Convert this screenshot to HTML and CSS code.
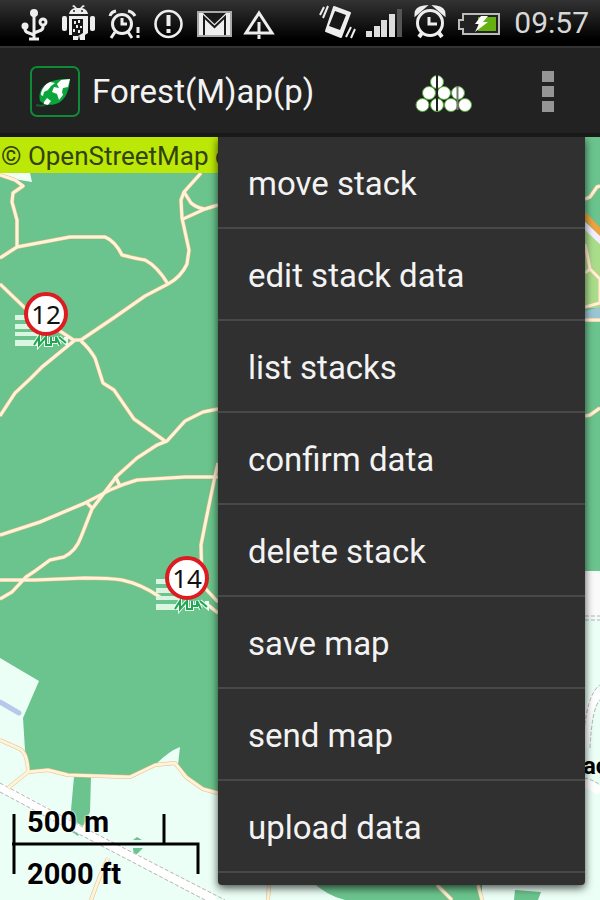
FILE: index.html
```
<!DOCTYPE html>
<html lang="en">
<head>
    <meta charset="UTF-8">
    <meta name="viewport" content="width=device-width, initial-scale=1.0">
    <title>Forest(M)ap(p)</title>
    <link rel="stylesheet" href="styles.css">
</head>
<body>
<div class="statusbar">
  <div class="notifications">
    <!-- usb -->
    <svg width="28" height="36" viewBox="0 0 28 36" fill="none" stroke="#eee" stroke-width="3">
      <path d="M14 8V34M5 21v3q0 3 4 4l5 2M23 19v3q0 3-4 4l-5 2"/>
      <circle cx="14" cy="8" r="4" fill="#eee" stroke="none"/><circle cx="5" cy="21" r="3.5" fill="#eee" stroke="none"/>
      <circle cx="23" cy="17" r="3"/><path d="M9 34h10" stroke-width="3"/>
    </svg>
    <!-- android -->
    <svg width="33" height="36" viewBox="0 0 33 36" fill="#eee">
      <path d="M7 9q1-5 6-6l-3-2 2-1 3 3h3l3-3 2 1-3 2q5 1 6 6z"/>
      <rect x="0" y="11" width="5" height="15" rx="2"/><rect x="28" y="11" width="5" height="15" rx="2"/>
      <path d="M7 11h19v17l-3 2v5h-5l-1-5-1 5h-5v-5H7z"/>
      <path d="M10 14h11v14l-5 3h-6z" fill="#161616"/>
      <path d="M12 16h2v3h-2zM16 15h2v3h-2zM14 20h2v3h-2zM18 21h2v2h-2zM11 24h2v3h-2zM16 25h2v3h-2z"/>
      <circle cx="12" cy="6" r="1" fill="#222"/><circle cx="20" cy="6" r="1" fill="#222"/>
    </svg>
    <!-- alarm with mark -->
    <svg width="31" height="36" viewBox="0 0 31 36" fill="none" stroke="#eee" stroke-width="3">
      <circle cx="13" cy="19" r="9.5"/><path d="M13 13v6h5"/><path d="M1 11q1-4 6-5M19 6q5 1 7 5" stroke-width="3"/>
      <path d="M6 27l-4 6M19 27l4 6"/><path d="M29 22v6M29 30v3" stroke-width="3"/>
    </svg>
    <!-- notice -->
    <svg width="30" height="36" viewBox="0 0 30 36" fill="none" stroke="#eee" stroke-width="2.6">
      <circle cx="14.5" cy="19" r="13"/><path d="M14.5 10v11M14.5 24v4" stroke-width="4"/>
    </svg>
    <!-- gmail -->
    <svg width="35" height="36" viewBox="0 0 35 36">
      <rect x="0" y="7" width="33" height="24" fill="#eee" stroke="#aaa" stroke-width="2"/>
      <path d="M6 30V12l10.500 10L27 12v18" fill="none" stroke="#1a1a1a" stroke-width="2"/>
      <path d="M5 8h23l-11.500 11z" fill="#1a1a1a"/>
    </svg>
    <!-- warning -->
    <svg width="32" height="36" viewBox="0 0 32 36" fill="none" stroke="#eee" stroke-width="3">
      <path d="M12 8L-1 28h26z"/><path d="M12 17v11M12 30v4"/>
    </svg>
  </div>
  <div class="system">
    <!-- vibrate -->
    <svg width="34" height="36" viewBox="0 0 34 36" fill="none" stroke="#eee">
      <path d="M14 2l16 6-9 24-15-6z" fill="#eee" stroke-width="2" stroke-linejoin="round"/>
      <path d="M15 6l11 4-6 15-11-4z" fill="#181818" stroke="none"/>
      <path d="M4 2L0 10M8 1L3 13M31 22l-5 10M35 24l-4 9" stroke-width="2"/>
    </svg>
    <!-- signal -->
    <svg width="37" height="36" viewBox="0 0 37 36" fill="#ddd">
      <rect x="0" y="26" width="6" height="6"/><rect x="8" y="21" width="6" height="11"/>
      <rect x="15" y="15" width="6" height="17"/><rect x="23" y="9" width="6" height="23"/>
      <rect x="31" y="4" width="5" height="28" fill="#555"/>
    </svg>
    <!-- alarm clock -->
    <svg width="33" height="36" viewBox="0 0 33 36" fill="none" stroke="#eee" stroke-width="3">
      <circle cx="15" cy="18" r="12.500"/><path d="M14 12v7h8"/>
      <path d="M1 9q0-6 8-7zM29 9q0-6-8-7z" fill="#eee"/><path d="M7 28l-3 4M24 28l3 4" stroke-width="4"/>
    </svg>
    <!-- battery -->
    <svg width="42" height="36" viewBox="0 0 42 36">
      <path d="M3 9h36v20H3v-5h-4v-9h4z" fill="#222" stroke="#bbb" stroke-width="2"/>
      <rect x="18" y="12" width="18" height="14" fill="#67b011"/>
      <path d="M21 11h7l-5 6h5L15 27l4-8h-4z" fill="#fff"/>
    </svg>
    <span class="clock">09:57</span>
  </div>
</div>

<header class="actionbar">
  <svg class="logo" width="50" height="51" viewBox="0 0 50 51">
    <rect x="1" y="1" width="48" height="49" rx="6" fill="#1f2420" stroke="#118a37" stroke-width="2"/>
    <path d="M10 35C7 22 17 12 40 13C39 31 30 42 14 38z" fill="#0aa63c"/>
    <path d="M6 39q8 2 12-2" fill="none" stroke="#155f2d" stroke-width="2"/>
    <path d="M11 27q2-8 9-11l5 1-4 3-3 4-4 2-1 4-2-1zM31 14l9-1-2 8-5 1-1 4 1 3-4 5-2-6-5-2 2-5 5 1-2-4zM14 36l3-4 4 3-3 4-4-1z" fill="#fff"/>
  </svg>
  <h1>Forest(M)ap(p)</h1>
  <button class="stackbtn" aria-label="Stacks">
    <svg width="58" height="36" viewBox="0 0 58 36">
      <g fill="#fff" stroke="#50a535" stroke-width="1">
        <circle cx="22" cy="8" r="6.500"/><circle cx="14" cy="19" r="6.500"/><circle cx="29" cy="19" r="6.500"/><circle cx="43" cy="19" r="6.500"/>
        <circle cx="7.500" cy="31" r="6.500"/><circle cx="22" cy="31" r="6.500"/><circle cx="36" cy="31" r="6.500"/><circle cx="50" cy="31" r="6.500"/>
      </g>
      <path d="M22 1v36" stroke="#222" stroke-width="2"/><path d="M42.500 12v24" stroke="#777" stroke-width="2"/>
    </svg>
  </button>
  <button class="morebtn" aria-label="More options"><i></i><i></i><i></i></button>
</header>

<main class="map">
  <svg class="tiles" viewBox="0 137 600 763" preserveAspectRatio="xMinYMin slice">
    <rect y="137" width="600" height="763" fill="#6bc48d"/>
    <!-- open land -->
    <path d="M0 173h30l2 9-18-3-14-4z" fill="#effff5"/>
    <path d="M0 658l39 23-16 37 2 32 5 22h20l12 3h68l25-10q14-14 25-18l-2 18 17 19 23 9 382-8V900H0z" fill="#ebfff6"/>
    <path d="M74 777h17l-1 35-12 24-9-6 2-20zM133 840l4-3 5 3zM133 848h10l-9 9z" fill="#6bc48d"/>
    <path d="M310 880h172v20H345q-18-4-35-20zM515 890l26 2-3 8h-24z" fill="#6bc48d"/>
    <path d="M585 571h15v231l-15-6z" fill="#ebfff6"/>
    <path d="M585 571h12l3 5v42h-15z" fill="#fafafa"/>
    <path d="M0 702l19 11" stroke="#b7c9eb" stroke-width="5" stroke-linecap="round"/>
    <path d="M585 226l15 15v67h-15z" fill="#a9dd8a"/>
    <path d="M585 311l15-4v12h-15z" fill="#9cc5d3"/>
    <!-- railway -->
    <path d="M0 787l75 40 140 73" class="railway"/>
    <path d="M0 783l75 40 150 77M0 792l75 40 130 68" class="railedge"/>
    <path d="M583 748q4-48 17-56M583 782q8 2 17 10" class="railway"/>
    <path d="M584 731q4-38 16-46M590 748q2-40 10-48M585 616h15M585 620h15M584 778q10 2 16 7" class="railedge"/>
    <!-- forest tracks, the second pass draws the light centre -->
    <g class="track">
      <g id="tracks">
        <path d="M0 175l15 5 8 6-10 7-1 9 5 18v27"/>
        <path d="M0 258l17-11 53-10h35q10 4 17 18 16 4 23 5 12 6 23 24"/>
        <path d="M0 284l25 24 50 33"/>
        <path d="M201 173l-17 19-3 8 1 18 7 32-2 14q-6 13-19 20l-23 12-30 21-34 23h-6l-33 27-12 12-15 14-15 23"/>
        <path d="M184 192l7 11q6 5 14 6l13-4M205 209l-22 10"/>
        <path d="M81 341q8 7 14 17l8 25 11 7 20 29 31 22"/>
        <path d="M218 409l-15 3-18 9-18 20-10 4-20 13-20 18-25 33-11 28q-5 14-17 20l-14 3-15 11-9 6-14 15-12 7"/>
        <path d="M0 535l40-13 45-19 25-13q13-6 27-10l48-3h33M115 476l5 10M86 502l6 6"/>
        <path d="M218 463q-8 36-17 82l1 40 16 17M218 613l-10-8"/>
        <path d="M0 580h35l50-2q25 0 37 2 19 4 38 17"/>
        <path d="M585 199l5-2 7-10 3-1M585 244l5 25 10 10v24l-15 4M590 269l-5 4M585 320h15M585 416l5-1 10-7"/>
        <path d="M0 740l20 9q8 5 8 23l-20 16M28 772l20-2 20 5 62 2 25-12 20-2 11 14 17 12 15 4"/>
        <path d="M108 858l-8 18-9 24M269 885l-1 15M437 885l15 15M478 885l4 15"/>
      </g>
    </g>
    <g class="trackfill"><use href="#tracks"/></g>
    <path d="M583 214l20 21" stroke="#f2a13c" stroke-width="6"/><path d="M583 224l20 19" stroke="#f2edff" stroke-width="6"/>
  </svg>

  <p class="attribution">© OpenStreetMap contributors</p>

  <div class="pin pin-12">
    <svg width="56" height="24" viewBox="0 0 56 24"><use href="#stack"/></svg>
    <span>12</span>
  </div>
  <div class="pin pin-14">
    <svg width="56" height="24" viewBox="0 0 56 24"><use href="#stack"/></svg>
    <span>14</span>
  </div>
  <svg class="defs" width="0" height="0">
    <defs>
    <g id="stack">
      <path d="M0-7h20v5H0zM0 2h20v5H0zM0 10h24v4H0zM0 18h22v6H0z" fill="#daf5e1"/>
      <path d="M19 23l5-8v8l7-8v8h5v-8M36 20h5v-5l4 8M44 15l7 6v-6" fill="none" stroke="#effcf2" stroke-width="4"/>
      <path d="M19 23l5-8v8l7-8v8h5v-8M36 20h5v-5l4 8M44 15l7 6" fill="none" stroke="#23a553" stroke-width="2"/>
    </g>
    </defs>
  </svg>
  <span class="place">ac</span>

  <div class="scale">
    <svg width="188" height="60" viewBox="0 0 188 60" fill="none" stroke="#000" stroke-width="3">
      <path d="M2 0v60M152 0v30M0 30h186v30"/>
    </svg>
    <span>500 m</span>
    <span>2000 ft</span>
  </div>

  <nav class="menu">
    <button>move stack</button>
    <button>edit stack data</button>
    <button>list stacks</button>
    <button>confirm data</button>
    <button>delete stack</button>
    <button>save map</button>
    <button>send map</button>
    <button>upload data</button>
  </nav>
</main>
</body>
</html>
```
FILE: styles.css
```
* {
  box-sizing: border-box;
}
body {
  margin: 0;
  height: 100vh;
  display: flex;
  flex-direction: column;
  overflow: hidden;
  font-family: Roboto, "Liberation Sans", sans-serif;
  background: #222222;
}
button {
  border: none;
  padding: 0;
  background: none;
  font: inherit;
  color: inherit;
  cursor: pointer;
}
svg {
  display: block;
  overflow: visible;
}

.statusbar {
  flex: none;
  height: 46px;
  padding: 0 11px 0 20px;
  display: flex;
  justify-content: space-between;
  align-items: center;
  background: linear-gradient(#333333, #000000 85%);
}
.notifications {
  display: flex;
  gap: 14px;
}
.system {
  display: flex;
  align-items: center;
  gap: 12px;
}
.clock {
  color: #d8d8d8;
  font-size: 30px;
  line-height: 36px;
}

.actionbar {
  flex: none;
  height: 91px;
  padding: 2px 46px 0 30px;
  display: flex;
  align-items: center;
  border-top: 2px solid #333333;
  border-bottom: 4px solid #191919;
  background: #222222;
}
.actionbar h1 {
  flex: 1;
  margin: 0 0 0 12px;
  font-size: 33px;
  line-height: 40px;
  font-weight: normal;
  color: #f3f3f3;
}
.morebtn {
  display: flex;
  flex-direction: column;
  gap: 4px;
  margin-left: 69px;
}
.morebtn i {
  width: 12px;
  height: 11px;
  background: #959595;
}

.map {
  flex: 1;
  position: relative;
  overflow: hidden;
  background: #ebfff6;
}
.tiles {
  position: absolute;
  top: 0;
  left: 0;
  width: 100%;
  height: 100%;
  fill: none;
}
.track,
.trackfill {
  fill: none;
  stroke: #e8bd80;
  stroke-width: 4;
  stroke-linejoin: round;
}
.trackfill {
  stroke: #fff3db;
  stroke-width: 3;
}
.railway {
  fill: none;
  stroke: #ffffff;
  stroke-width: 9;
}
.railedge {
  fill: none;
  stroke: #b5b5b5;
  stroke-width: 1;
  stroke-dasharray: 4 2;
}
.attribution {
  position: relative;
  width: 218px;
  overflow: hidden;
  margin: 0;
  height: 36px;
  padding-left: 1px;
  font-size: 26px;
  line-height: 38px;
  white-space: nowrap;
  color: #33420b;
  background: #bbe807;
}

.pin {
  position: absolute;
  width: 56px;
}
.pin svg {
  position: absolute;
  top: 30px;
  left: 0;
}
.pin span {
  position: relative;
  display: block;
  width: 44px;
  height: 44px;
  margin-left: 9px;
  border: 4px solid #dc1c20;
  border-radius: 50%;
  background: #ffffff;
  font-family: "Noto Sans", sans-serif;
  font-size: 26px;
  line-height: 36px;
  text-align: center;
  color: #111111;
}
.pin-12 {
  left: 15px;
  top: 155px;
}
.pin-14 {
  left: 156px;
  top: 419px;
}
.defs {
  position: absolute;
}
.place {
  position: absolute;
  left: 583px;
  top: 614px;
  font-size: 24px;
  line-height: 30px;
  font-weight: bold;
}

.scale {
  position: absolute;
  left: 12px;
  bottom: 11px;
  display: flex;
  flex-direction: column;
  gap: 22px;
  padding-left: 15px;
}
.scale svg {
  position: absolute;
  left: 0;
  top: 7px;
}
.scale span {
  position: relative;
  font-size: 29px;
  line-height: 30px;
  font-weight: bold;
  text-shadow: 0 0 2px #ffffff, 0 0 2px #ffffff;
}

.menu {
  position: absolute;
  top: 0;
  left: 218px;
  right: 15px;
  bottom: 15px;
  overflow: hidden;
  border-radius: 0 0 4px 4px;
  background: #303030;
  box-shadow: 0 3px 9px rgba(0,0,0,0.7);
}
.menu button {
  display: block;
  width: 100%;
  height: 92px;
  padding: 2px 30px 0;
  border-bottom: 2px solid #484848;
  font-size: 33px;
  text-align: left;
  color: #f3f3f3;
}
```
